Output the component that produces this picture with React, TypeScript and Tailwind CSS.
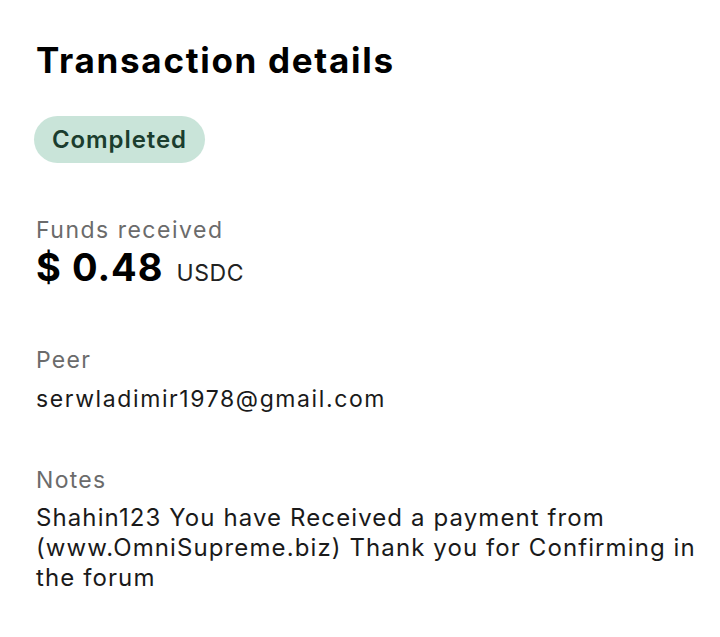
export default function App() {
  return (
    <div className="min-h-[637px] w-[720px] bg-white pl-[36px] pr-[20px] pt-[40px] font-['Inter',sans-serif] text-[#111]">
      <h1 className="text-[35px] font-bold leading-[40px] tracking-[1.7px] text-black">Transaction details</h1>

      <div className="mt-[36px]">
        <span className="-ml-[2px] inline-flex h-[47px] items-center rounded-full bg-[#c9e4d9] px-[18px] text-[24px] font-semibold tracking-[0.9px] text-[#1b3d2e]">
          Completed
        </span>
      </div>

      <div className="mt-[52px]">
        <div className="text-[23px] leading-[30px] tracking-[1.5px] text-[#6b6b6b]">Funds received</div>
        <div className="flex items-baseline gap-[13px]">
          <span className="text-[38px] font-bold leading-[44px] tracking-[1px] text-black">$ 0.48</span>
          <span className="text-[23px] tracking-[0.6px] text-[#222]">USDC</span>
        </div>
      </div>

      <div className="mt-[54px]">
        <div className="text-[23px] leading-[30px] tracking-[1.3px] text-[#6b6b6b]">Peer</div>
        <div className="mt-[9px] text-[23px] leading-[30px] tracking-[1.6px] text-[#1a1a1a]">serwladimir1978@gmail.com</div>
      </div>

      <div className="mt-[51px]">
        <div className="text-[23px] leading-[30px] tracking-[1.3px] text-[#6b6b6b]">Notes</div>
        <div className="mt-[8px] text-[24px] leading-[30px] tracking-[1.1px] text-[#1a1a1a]">
          Shahin123 You have Received a payment from (www.OmniSupreme.biz) Thank you for Confirming in the forum
        </div>
      </div>
    </div>
  )
}
